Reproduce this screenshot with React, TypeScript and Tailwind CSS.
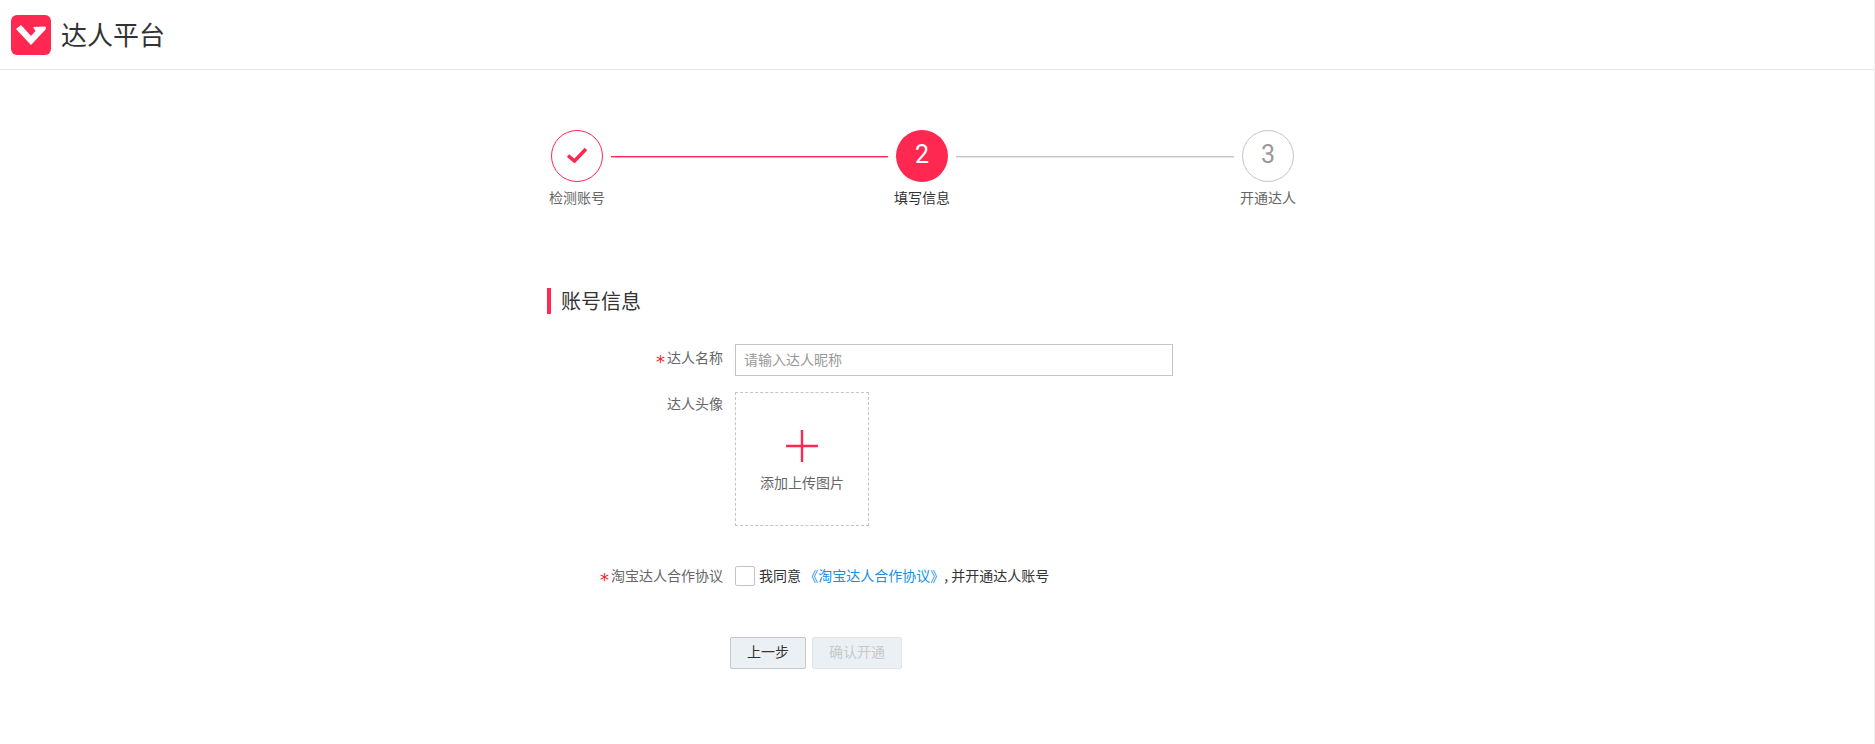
import React from "react";

const font = { fontFamily: '"Noto Sans CJK SC", sans-serif' };

function Logo() {
  return (
    <svg width="40" height="40" viewBox="0 0 40 40">
      <rect width="40" height="40" rx="6" fill="#ff2851" />
      <path d="M5 14 L10 10 L20 21 L24.5 16 L22 12 L34.5 11.5 L35 14 L20 30 Z" fill="#fff" />
    </svg>
  );
}

function Step({ label, state, n }: { label: string; state: string; n?: string }) {
  return (
    <div className="relative w-[52px] h-[52px] shrink-0">
      {state === "done" && (
        <div className="w-full h-full rounded-full border border-[#ff2851] flex items-center justify-center">
          <svg width="20" height="16" viewBox="0 0 20 16" className="-translate-y-px">
            <path d="M1 8.5 L7.5 14 L19 2" fill="none" stroke="#ff2851" strokeWidth="3.6" />
          </svg>
        </div>
      )}
      {state === "active" && (
        <div className="w-full h-full rounded-full bg-[#ff2851] text-white flex items-center justify-center text-[25px] pb-[2px]" style={{ fontFamily: "Roboto, sans-serif" }}>
          {n}
        </div>
      )}
      {state === "todo" && (
        <div className="w-full h-full rounded-full border border-[#c4c4ce] text-[#999] flex items-center justify-center text-[25px] pb-[2px]" style={{ fontFamily: "Roboto, sans-serif" }}>
          {n}
        </div>
      )}
      <div className={`absolute top-[57px] left-1/2 -translate-x-1/2 whitespace-nowrap text-[14px] leading-5 ${state === "active" ? "text-[#333]" : "text-[#666]"}`}>
        {label}
      </div>
    </div>
  );
}

function Label({ text, req }: { text: string; req?: boolean }) {
  return (
    <div className="w-[188px] pr-3 shrink-0 text-right text-[14px] leading-5 text-[#666]">
      {req && (
        <span className="text-[#f5222d] text-[18px] leading-none mr-[2px] inline-block translate-y-[5px]" style={{ fontFamily: '"DejaVu Sans", sans-serif' }}>
          *
        </span>
      )}
      {text}
    </div>
  );
}

export default function App() {
  return (
    <div className="min-h-[744px] bg-white border-r border-[#f0f0f0]" style={font}>
      <header className="h-[70px] border-b border-[#e6e6e6] flex items-center pl-[11px]">
        <Logo />
        <span className="ml-[10px] text-[26px] text-[#333] leading-none pb-[2px]">达人平台</span>
      </header>
      <main className="w-[780px] mx-auto">
        <div className="flex items-center pt-[60px] h-[112px] pl-[4px]">
          <Step label="检测账号" state="done" />
          <div className="h-px w-[277px] mx-2 bg-[#ff2851] shadow-[0_1px_0_#ffa9b9]" />
          <Step label="填写信息" state="active" n="2" />
          <div className="h-px w-[278px] mx-2 bg-[#c4c4ce] shadow-[0_1px_0_#e6e6ec]" />
          <Step label="开通达人" state="todo" n="3" />
        </div>
        <div className="mt-[106px] flex items-center border-l-4 border-[#ff2851] h-[26px] pl-[10px] text-[20px] text-[#333]">
          账号信息
        </div>
        <div className="mt-[30px] flex items-start h-8">
          <div className="pt-[3px]"><Label text="达人名称" req /></div>
          <input
            placeholder="请输入达人昵称"
            className="w-[438px] h-8 border border-[#c4c4ce] px-2 pb-[3px] text-[14px] outline-none placeholder:text-[#999]"
          />
        </div>
        <div className="mt-4 flex items-start">
          <div className="pt-[1px]"><Label text="达人头像" /></div>
          <div className="w-[134px] h-[134px] border border-dashed border-[#c4c4ce] flex flex-col items-center pt-[37px]">
            <svg width="32" height="32" viewBox="0 0 32 32">
              <path d="M16 0 V32 M0 16 H32" stroke="#ff2851" strokeWidth="2.4" />
            </svg>
            <div className="mt-[10px] text-[14px] leading-5 text-[#666]">添加上传图片</div>
          </div>
        </div>
        <div className="mt-[40px] flex items-start h-5">
          <div className="-mt-px"><Label text="淘宝达人合作协议" req /></div>
          <span className="w-5 h-5 rounded-[2px] border border-[#c4c4ce] shrink-0" />
          <span className="ml-[4px] -mt-px text-[14px] leading-5 text-[#333] whitespace-nowrap">
            我同意 <a className="text-[#1890e0]">《淘宝达人合作协议》</a>, 并开通达人账号
          </span>
        </div>
        <div className="mt-[51px] flex gap-[6px] pl-[183px]">
          <button className="w-[76px] h-8 pb-[3px] rounded-[2px] bg-[#ebf0f5] border border-[#c4c6cf] text-[14px] text-[#333]">上一步</button>
          <button className="w-[90px] h-8 pb-[3px] rounded-[2px] bg-[#ebf0f5] border border-[#e0e3e8] text-[14px] text-[#c8c8c8]">确认开通</button>
        </div>
      </main>
    </div>
  );
}
